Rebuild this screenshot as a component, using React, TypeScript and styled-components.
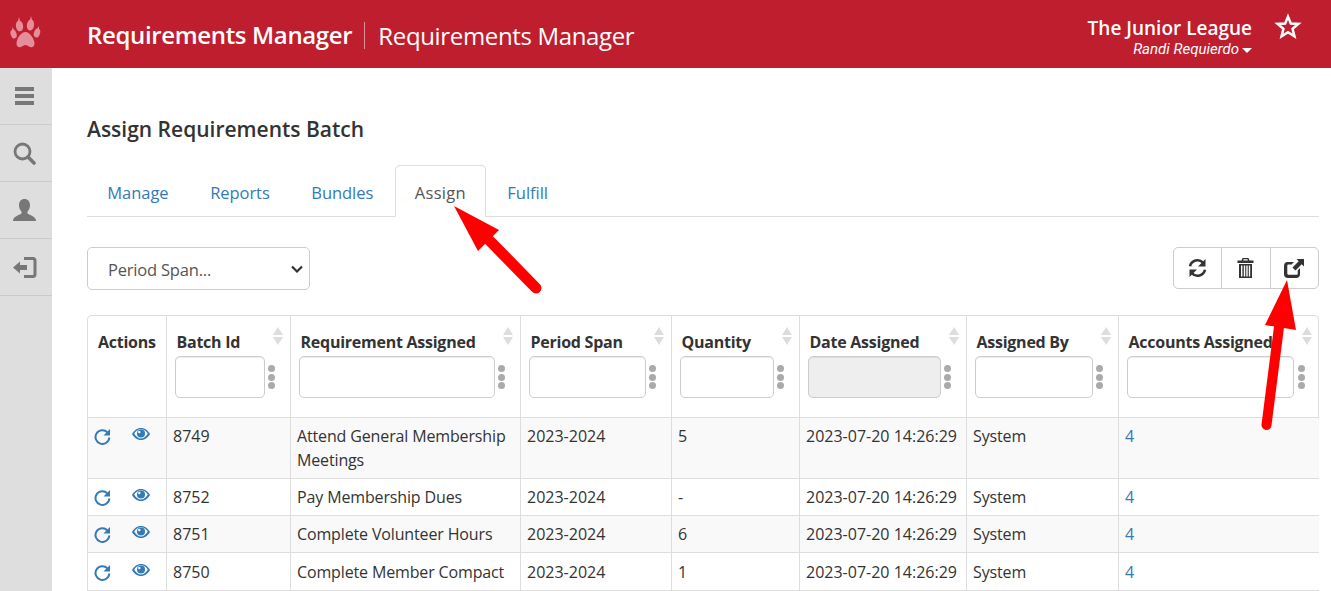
import React from "react";
import styled, { createGlobalStyle } from "styled-components";

const Global = createGlobalStyle`
  html, body { margin: 0; padding: 0; width: 1331px; height: 591px; overflow: hidden; background: #fff; }
  body { font-family: "Open Sans", "Noto Sans", sans-serif; color: #333; font-size: 15px; }
  * { box-sizing: border-box; }
`;

const Page = styled.div`position: relative; width: 1331px; height: 591px; overflow: hidden;`;
const Header = styled.header`
  height: 68px; background: #bf1e2e; display: flex; align-items: center; color: #fff;
`;
const LogoCell = styled.div`width: 52px; display: flex; justify-content: center; flex: none;`;
const Brand = styled.div`margin-left: 35px; margin-top: 2px; display: flex; align-items: center; flex: 1;`;
const BrandMain = styled.span`font-size: 24px; font-weight: 600; letter-spacing: -0.35px; line-height: 30px;`;
const BrandSub = styled.span`
  font-size: 24px; letter-spacing: -0.35px; margin-left: 12px; padding-left: 13px;
  border-left: 1px solid rgba(255,255,255,.5); line-height: 27px;
`;
const Account = styled.div`display: flex; flex-direction: column; align-items: flex-end; margin-right: 79px; margin-top: 5px;`;
const Org = styled.div`font-size: 19px; font-weight: 600; letter-spacing: 0; line-height: 25px;`;
const User = styled.div`
  font-family: Roboto, sans-serif; font-style: italic; font-size: 15px; line-height: 16px; display: flex; align-items: center; gap: 3px;
`;
const Caret = styled.span`width: 0; height: 0; border-left: 5px solid transparent; border-right: 5px solid transparent; border-top: 5px solid #fff; margin-top: 2px;`;
const StarWrap = styled.div`position: absolute; left: 1274px; top: 13px; line-height: 0;`;

const Body = styled.div`display: flex; height: 523px;`;
const Side = styled.nav`width: 52px; background: #dedede; flex: none;`;
const SideItem = styled.div`
  height: 57px; border-bottom: 1px solid #cacaca; display: flex; align-items: center; justify-content: center;
  color: #777; padding-right: 3px;
`;
const Main = styled.main`flex: 1; padding: 0 12px 0 35px; min-width: 0;`;
const Title = styled.h1`
  margin: 47px 0 0; font-size: 21px; line-height: 29px; font-weight: 600; letter-spacing: 0; color: #333;
`;
const Tabs = styled.ul`
  list-style: none; margin: 21px 0 0; padding: 0; display: flex; height: 52px; border-bottom: 1px solid #ddd;
`;
const Tab = styled.li<{ $active?: boolean }>`
  height: 52px; padding: 14px 19.3px 0; font-size: 16.5px; line-height: 26px;
  letter-spacing: ${p => (p.$active ? "0.25px" : "-0.05px")};
  color: ${p => (p.$active ? "#555" : "#337ab7")};
  border: 1px solid ${p => (p.$active ? "#ddd" : "transparent")};
  border-bottom-color: ${p => (p.$active ? "#fff" : "transparent")};
  border-radius: 5px 5px 0 0; background: ${p => (p.$active ? "#fff" : "transparent")};
  margin-right: 1px;
`;
const Toolbar = styled.div`display: flex; justify-content: space-between; align-items: flex-start; margin-top: 30px; height: 43px;`;
const Select = styled.div`
  width: 223px; height: 43px; border: 1px solid #ccc; border-radius: 5px; padding: 1px 6px 0 20px; display: flex;
  align-items: center; justify-content: space-between; color: #555; font-size: 16.5px; letter-spacing: -0.2px;
`;
const BtnGroup = styled.div`display: flex; border: 1px solid #ccc; border-radius: 5px; height: 42px;`;
const Btn = styled.div`
  width: 47px; display: flex; align-items: center; justify-content: center; color: #333;
  & + & { border-left: 1px solid #ccc; width: 48.5px; }
`;
const TableBox = styled.div`
  margin-top: 25px; width: 1232px; border: 1px solid #ddd; border-bottom: none; border-radius: 5px 5px 0 0;
`;
const Table = styled.table`border-collapse: collapse; table-layout: fixed; width: 1231px;`;
const Th = styled.th`
  height: 101px; padding: 0; vertical-align: top; text-align: left; border-left: 1px solid #ddd; border-bottom: 1px solid #ddd;
  position: relative; font-size: 16px; font-weight: 700; letter-spacing: -0.25px; color: #333;
  &:first-child { border-left: none; }
`;
const ThLabel = styled.div`padding: 15px 0 0 10px; line-height: 22px; white-space: nowrap;`;
const FilterRow = styled.div`display: flex; align-items: center; margin: 3px 11px 0 8px;`;
const Filter = styled.div<{ $disabled?: boolean }>`
  flex: 1; height: 42px; border: 1px solid #ccc; border-radius: 5px; background: ${p => (p.$disabled ? "#eee" : "#fff")};
  box-shadow: inset 0 1px 1px rgba(0,0,0,.075);
`;
const Dots = styled.div`width: 14px; display: flex; flex-direction: column; align-items: center; gap: 1.4px; flex: none;`;
const Dot = styled.span`width: 7px; height: 7px; border-radius: 50%; background: #aaa;`;
const Sort = styled.div`position: absolute; right: 7px; top: 11px; display: flex; flex-direction: column; gap: 2px;`;
const SortUp = styled.span`width: 0; height: 0; border-left: 5.5px solid transparent; border-right: 5.5px solid transparent; border-bottom: 8px solid #ddd;`;
const SortDown = styled.span`width: 0; height: 0; border-left: 5.5px solid transparent; border-right: 5.5px solid transparent; border-top: 8px solid #ddd;`;
const Tr = styled.tr<{ $odd?: boolean }>`background: ${p => (p.$odd ? "#f9f9f9" : "#fff")};`;
const Td = styled.td<{ $h: number; $top: number; $num?: boolean }>`
  height: ${p => p.$h}px; padding: ${p => p.$top}px 6px 0 6.500px; vertical-align: top; border-left: 1px solid #ddd; border-bottom: 1px solid #ddd;
  font-size: 16px; line-height: 24px; letter-spacing: ${p => (p.$num ? "0" : "-0.14px")}; color: #333; white-space: nowrap;
  &:first-child { border-left: none; padding-left: 6px; }
`;
const ActionCell = styled.div`display: flex; align-items: flex-start; gap: 21px; padding-top: 4px; height: 24px;`;
const EyeWrap = styled.span`line-height: 0; margin-top: -0.5px;`;
const LinkNum = styled.span`color: #337ab7;`;
const Overlay = styled.svg`position: absolute; left: 0; top: 0; pointer-events: none;`;

const Paw = () => (
  <svg width="32" height="36" viewBox="0 0 32 36" fill="#e58e9a">
    <ellipse cx="9.5" cy="10" rx="3.6" ry="5.4" transform="rotate(-8 9.5 10)" />
    <ellipse cx="20.5" cy="9" rx="3.6" ry="5.6" transform="rotate(8 20.5 9)" />
    <ellipse cx="3.6" cy="18" rx="2.9" ry="4.6" transform="rotate(-18 3.6 18)" />
    <ellipse cx="27" cy="17" rx="3" ry="4.6" transform="rotate(18 27 17)" />
    <path d="M15.5 16c4 0 8.5 6 9 11 .3 3.5-2.5 5-4.5 4-2-.9-2.8-2-4.5-2s-2.600 1.200-4.500 2c-2.200.9-4.800-.6-4.500-4 .5-5 4.500-11 9-11z" />
    <path d="M9 1l1 4-2 0zM21 0l1 4-2 0zM2.500 11l1.500 3-2 .5zM29 10l0 3.500-2-.5z" />
  </svg>
);
const Star = () => (
  <svg width="28" height="27" viewBox="0 0 26 26" fill="none" stroke="#fff" strokeWidth="2.4" strokeLinejoin="miter">
    <path d="M13 3.500l2.700 6.600 7.300.4-5.600 4.700 1.800 7.200L13 18.500l-6.200 3.900 1.800-7.200L3 10.500l7.300-.4z" />
  </svg>
);
const Bars = () => (
  <svg width="19" height="18" viewBox="0 0 19 18" fill="#777">
    <rect y="0" width="19" height="4" /><rect y="7" width="19" height="4" /><rect y="14" width="19" height="4" />
  </svg>
);
const Search = () => (
  <svg width="23" height="23" viewBox="0 0 23 23" fill="none" stroke="#777">
    <circle cx="9.500" cy="9.500" r="7.500" strokeWidth="2.800" />
    <path d="M15 15l6 6" strokeWidth="3.600" strokeLinecap="round" />
  </svg>
);
const Person = () => (
  <svg width="23" height="23" viewBox="0 0 23 23" fill="#777">
    <path d="M11.500 0c3.500 0 5.500 2.600 5.500 6.200 0 2.800-1.200 5-2.400 6.200-.5.800-.3 2 .6 2.500 2.500 1.300 7.800 2.800 7.800 7.100H0c0-4.300 5.300-5.800 7.800-7.100.9-.5 1.100-1.700.6-2.500C7.200 11.200 6 9 6 6.200 6 2.600 8 0 11.500 0z" />
  </svg>
);
const Login = () => (
  <svg width="24" height="21" viewBox="0 0 24 21" fill="#777">
    <path d="M0 10.500L7 4.500v3.500h7v5H7v3.500z" />
    <path d="M11 0h9c2.200 0 3.500 1.300 3.500 3.500v14c0 2.200-1.300 3.500-3.500 3.500h-9v-3h8.500c.7 0 1-.3 1-1V4c0-.7-.3-1-1-1H11z" />
  </svg>
);
const Refresh = () => (
  <svg width="19" height="20" viewBox="0 0 19 20" fill="none">
    <path d="M2 8.300A7.700 7.700 0 0 1 15 4.600" stroke="#333" strokeWidth="2.600" />
    <path d="M17.500 1v7.500H10z" fill="#333" />
    <path d="M17 11.700A7.700 7.700 0 0 1 4 15.400" stroke="#333" strokeWidth="2.600" />
    <path d="M1.500 19v-7.500H9z" fill="#333" />
  </svg>
);
const Trash = () => (
  <svg width="17" height="20" viewBox="0 0 17 20" fill="#333">
    <path d="M5.500 0h6l1 2.500H16.500V5H.5V2.500h4zM6.500 1.300l-.4 1.200h4.800l-.4-1.200z" />
    <path d="M2 6h13v14H2zM4 7.500v11h1.400v-11zM6.800 7.500v11h1.400v-11zM9.300 7.500v11h1.400v-11zM11.800 7.500v11h1.400v-11z" fillRule="evenodd" />
  </svg>
);
const Share = () => (
  <svg width="20" height="19" viewBox="0 0 20 19" fill="#333">
    <path d="M12.500 0h7.500v7.500l-2.300-2.300-6.200 6.200-3-3 6.200-6.200z" />
    <path d="M3.500 3H10L7.500 5.500h-3c-.7 0-1.200.4-1.200 1.200v7.800c0 .7.400 1.200 1.200 1.200h8c.7 0 1.200-.4 1.200-1.200v-3L16 9v6c0 2.400-1.400 4-4 4H4c-2.600 0-4-1.600-4-4V7c0-2.600 1.400-4 3.500-4z" />
  </svg>
);
const Repeat = () => (
  <svg width="17" height="17" viewBox="0 0 17 17" fill="none">
    <path d="M13.300 4.200A6.900 6.900 0 1 0 15.300 9.500" stroke="#337ab7" strokeWidth="2" />
    <path d="M16 1v6.500H9.500z" fill="#337ab7" />
  </svg>
);
const Eye = () => (
  <svg width="18" height="14" viewBox="0 0 18 14" fill="#337ab7">
    <path fillRule="evenodd" d="M9 1c4 0 7.300 2.700 9 6-1.700 3.300-5 6-9 6s-7.300-2.700-9-6c1.700-3.300 5-6 9-6zM9 2.300c-2.800 0-5.200 1.800-6.800 4.200C3.800 9.400 6.200 11.500 9 11.500s5.200-2.100 6.800-5C14.200 4.100 11.800 2.300 9 2.300z" />
    <circle cx="9" cy="6.500" r="4" />
    <circle cx="7.300" cy="5" r="1.200" fill="#fff" />
  </svg>
);
const Chevron = () => (
  <svg width="12" height="8" viewBox="0 0 12 8" fill="none" stroke="#333" strokeWidth="2.200"><path d="M1 1.500l5 5 5-5" /></svg>
);

const columns = [
  { label: "Actions", w: 78, plain: true },
  { label: "Batch Id", w: 124 },
  { label: "Requirement Assigned", w: 230 },
  { label: "Period Span", w: 151 },
  { label: "Quantity", w: 128 },
  { label: "Date Assigned", w: 167, disabled: true },
  { label: "Assigned By", w: 152 },
  { label: "Accounts Assigned", w: 201 },
];

const rows = [
  { id: "8749", req: <>Attend General Membership<br />Meetings</>, qty: "5", h: 61, top: 6 },
  { id: "8752", req: "Pay Membership Dues", qty: "-", h: 37, top: 6 },
  { id: "8751", req: "Complete Volunteer Hours", qty: "6", h: 37, top: 6 },
  { id: "8750", req: "Complete Member Compact", qty: "1", h: 38, top: 7 },
];

export default function App() {
  return (
    <Page>
      <Global />
      <Header>
        <LogoCell><Paw /></LogoCell>
        <Brand>
          <BrandMain>Requirements Manager</BrandMain>
          <BrandSub>Requirements Manager</BrandSub>
        </Brand>
        <Account>
          <Org>The Junior League</Org>
          <User>Randi Requierdo <Caret /></User>
        </Account>
        <StarWrap><Star /></StarWrap>
      </Header>
      <Body>
        <Side>
          <SideItem><Bars /></SideItem>
          <SideItem><Search /></SideItem>
          <SideItem><Person /></SideItem>
          <SideItem><Login /></SideItem>
        </Side>
        <Main>
          <Title>Assign Requirements Batch</Title>
          <Tabs>
            <Tab>Manage</Tab>
            <Tab>Reports</Tab>
            <Tab>Bundles</Tab>
            <Tab $active>Assign</Tab>
            <Tab>Fulfill</Tab>
          </Tabs>
          <Toolbar>
            <Select>Period Span...<Chevron /></Select>
            <BtnGroup>
              <Btn><Refresh /></Btn>
              <Btn><Trash /></Btn>
              <Btn><Share /></Btn>
            </BtnGroup>
          </Toolbar>
          <TableBox>
            <Table>
              <colgroup>
                {columns.map(c => <col key={c.label} style={{ width: c.w }} />)}
              </colgroup>
              <thead>
                <tr>
                  {columns.map(c => (
                    <Th key={c.label}>
                      <ThLabel>{c.label}</ThLabel>
                      {!c.plain && (
                        <>
                          <Sort><SortUp /><SortDown /></Sort>
                          <FilterRow>
                            <Filter $disabled={c.disabled} />
                            <Dots><Dot /><Dot /><Dot /></Dots>
                          </FilterRow>
                        </>
                      )}
                    </Th>
                  ))}
                </tr>
              </thead>
              <tbody>
                {rows.map((r, i) => (
                  <Tr key={r.id} $odd={i % 2 === 0}>
                    <Td $h={r.h} $top={r.top}><ActionCell><Repeat /><EyeWrap><Eye /></EyeWrap></ActionCell></Td>
                    <Td $h={r.h} $top={r.top} $num>{r.id}</Td>
                    <Td $h={r.h} $top={r.top}>{r.req}</Td>
                    <Td $h={r.h} $top={r.top} $num>2023-2024</Td>
                    <Td $h={r.h} $top={r.top} $num>{r.qty}</Td>
                    <Td $h={r.h} $top={r.top} $num>2023-07-20 14:26:29</Td>
                    <Td $h={r.h} $top={r.top}>System</Td>
                    <Td $h={r.h} $top={r.top} $num><LinkNum>4</LinkNum></Td>
                  </Tr>
                ))}
              </tbody>
            </Table>
          </TableBox>
        </Main>
      </Body>
      <Overlay width="1331" height="591" viewBox="0 0 1331 591">
        <path d="M454 206L499 230L478 251z" fill="#f00" />
        <path d="M489.500 240.500L536 288" stroke="#f00" strokeWidth="11" strokeLinecap="round" fill="none" />
        <path d="M1287 280L1296 330L1265 325z" fill="#f00" />
        <path d="M1279 327L1266.500 425" stroke="#f00" strokeWidth="10" strokeLinecap="round" fill="none" />
      </Overlay>
    </Page>
  );
}
